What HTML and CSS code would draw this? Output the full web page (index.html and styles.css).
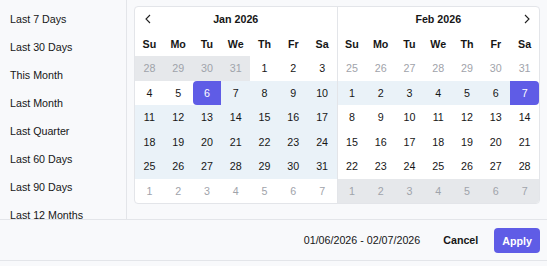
FILE: index.html
```html
<!DOCTYPE html>
<html lang="en">
<head>
    <meta charset="UTF-8">
    <meta name="viewport" content="width=device-width, initial-scale=1.0">
    <title>Date Range Picker</title>
    <link rel="stylesheet" href="styles.css">
</head>
<body>
    <div class="picker">
        <div class="picker-main">
            <ul class="presets">
                <li>Last 7 Days</li>
                <li>Last 30 Days</li>
                <li>This Month</li>
                <li>Last Month</li>
                <li>Last Quarter</li>
                <li>Last 60 Days</li>
                <li>Last 90 Days</li>
                <li>Last 12 Months</li>
            </ul>

            <div class="calendars">
                <div class="cal-box">
                    <!-- January -->
                    <div class="month">
                        <div class="month-head">
                            <button class="nav prev" aria-label="Previous month">
                                <svg width="7" height="10" viewBox="0 0 7 10"><polyline points="5,1 1,5 5,9" fill="none" stroke="#222" stroke-width="1.1"/></svg>
                            </button>
                            <span class="month-title">Jan 2026</span>
                            <span></span>
                        </div>
                        <div class="grid">
                            <span class="wd">Su</span><span class="wd">Mo</span><span class="wd">Tu</span><span class="wd">We</span><span class="wd">Th</span><span class="wd">Fr</span><span class="wd">Sa</span>

                            <span class="day muted shade">28</span><span class="day muted shade">29</span><span class="day muted shade">30</span><span class="day muted shade">31</span><span class="day">1</span><span class="day">2</span><span class="day">3</span>
                            <span class="day">4</span><span class="day">5</span><span class="day start">6</span><span class="day range">7</span><span class="day range">8</span><span class="day range">9</span><span class="day range">10</span>
                            <span class="day range">11</span><span class="day range">12</span><span class="day range">13</span><span class="day range">14</span><span class="day range">15</span><span class="day range">16</span><span class="day range">17</span>
                            <span class="day range">18</span><span class="day range">19</span><span class="day range">20</span><span class="day range">21</span><span class="day range">22</span><span class="day range">23</span><span class="day range">24</span>
                            <span class="day range">25</span><span class="day range">26</span><span class="day range">27</span><span class="day range">28</span><span class="day range">29</span><span class="day range">30</span><span class="day range">31</span>
                            <span class="day muted">1</span><span class="day muted">2</span><span class="day muted">3</span><span class="day muted">4</span><span class="day muted">5</span><span class="day muted">6</span><span class="day muted">7</span>
                        </div>
                    </div>

                    <!-- February -->
                    <div class="month second">
                        <div class="month-head">
                            <span></span>
                            <span class="month-title">Feb 2026</span>
                            <button class="nav next" aria-label="Next month">
                                <svg width="7" height="10" viewBox="0 0 7 10"><polyline points="2,1 6,5 2,9" fill="none" stroke="#222" stroke-width="1.1"/></svg>
                            </button>
                        </div>
                        <div class="grid">
                            <span class="wd">Su</span><span class="wd">Mo</span><span class="wd">Tu</span><span class="wd">We</span><span class="wd">Th</span><span class="wd">Fr</span><span class="wd">Sa</span>

                            <span class="day muted">25</span><span class="day muted">26</span><span class="day muted">27</span><span class="day muted">28</span><span class="day muted">29</span><span class="day muted">30</span><span class="day muted">31</span>
                            <span class="day range">1</span><span class="day range">2</span><span class="day range">3</span><span class="day range">4</span><span class="day range">5</span><span class="day range">6</span><span class="day end">7</span>
                            <span class="day">8</span><span class="day">9</span><span class="day">10</span><span class="day">11</span><span class="day">12</span><span class="day">13</span><span class="day">14</span>
                            <span class="day">15</span><span class="day">16</span><span class="day">17</span><span class="day">18</span><span class="day">19</span><span class="day">20</span><span class="day">21</span>
                            <span class="day">22</span><span class="day">23</span><span class="day">24</span><span class="day">25</span><span class="day">26</span><span class="day">27</span><span class="day">28</span>
                            <span class="day muted shade">1</span><span class="day muted shade">2</span><span class="day muted shade">3</span><span class="day muted shade">4</span><span class="day muted shade">5</span><span class="day muted shade">6</span><span class="day muted shade">7</span>
                        </div>
                    </div>
                </div>
            </div>
        </div>

        <div class="picker-footer">
            <span class="range-text">01/06/2026 - 02/07/2026</span>
            <button class="btn cancel">Cancel</button>
            <button class="btn apply">Apply</button>
        </div>
    </div>
</body>
</html>
```

FILE: styles.css
```css
body {
    margin: 0;
    font-family: "Liberation Sans", Arial, sans-serif;
    font-size: 10.7px;
    color: #161616;
    background-color: #f8f9fb;
}
.picker {
    width: 547px;
}
.picker-main {
    display: flex;
    height: 219px;
}
.presets {
    list-style: none;
    margin: 0;
    padding: 5px 0 0 10px;
    width: 116px;
    border-right: 1px solid #e3e5e9;
    overflow: hidden;
}
.presets li {
    height: 28px;
    line-height: 28px;
    white-space: nowrap;
}
.calendars {
    flex: 1;
    padding: 6px 7px 0 7px;
}
.cal-box {
    display: flex;
    background: white;
    border: 1px solid #e3e5e9;
    border-radius: 4px;
    overflow: hidden;
}
.month {
    flex: 1;
}
.month.second {
    border-left: 1px solid #e3e5e9;
}
.month-head {
    display: grid;
    grid-template-columns: 1fr auto 1fr;
    align-items: center;
    height: 24.5px;
}
.month-title {
    font-weight: bold;
}
.nav {
    background: none;
    border: none;
    padding: 0;
    width: 26px;
    height: 20px;
    display: flex;
    align-items: center;
    justify-content: center;
    cursor: pointer;
}
.nav.next {
    justify-self: end;
}
.grid {
    display: grid;
    grid-template-columns: repeat(7, 1fr);
    grid-auto-rows: 24.5px;
}
.wd, .day {
    display: flex;
    align-items: center;
    justify-content: center;
}
.wd {
    font-weight: bold;
}
.day.muted {
    color: #9fa3aa;
}
.day.shade {
    background-color: #e6e8eb;
}
.day.range {
    background-color: #eaf2f8;
}
.day.start, .day.end {
    background-color: #5f5ce6;
    color: white;
}
.day.start {
    border-radius: 4px 0 0 4px;
}
.day.end {
    border-radius: 0 4px 4px 0;
}
.picker-footer {
    display: flex;
    justify-content: flex-end;
    align-items: center;
    height: 40px;
    padding-right: 7px;
    border-top: 1px solid #e3e5e9;
    border-bottom: 1px solid #e3e5e9;
}
.range-text {
    margin-right: 15px;
}
.btn {
    font-family: inherit;
    font-size: 10.7px;
    font-weight: bold;
    height: 25px;
    padding: 0 8px;
    border: none;
    border-radius: 4px;
    cursor: pointer;
}
.btn.cancel {
    background: none;
    color: #161616;
    margin-right: 8px;
}
.btn.apply {
    background-color: #5f5ce6;
    color: white;
    margin-top: 1px;
}
```
